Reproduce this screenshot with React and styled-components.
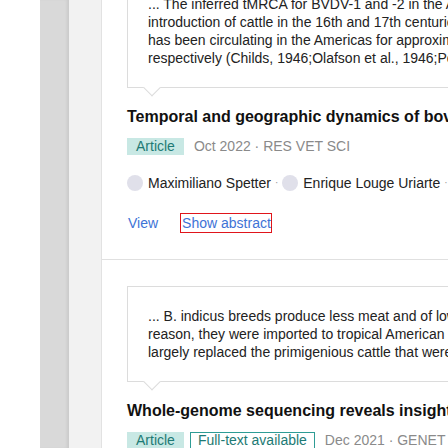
import React from "react";
import styled, { createGlobalStyle } from "styled-components";

const GlobalStyle = createGlobalStyle`
  html, body { margin: 0; padding: 0; background: #fff; overflow: hidden; }
  body { font-family: "Liberation Sans", Arial, sans-serif; color: #222; }
`;

const Page = styled.div`
  display: flex;
  height: 448px;
  width: 448px;
  overflow: hidden;
`;

const Gutter = styled.div`
  flex: 0 0 40px;
  background: #fff;
`;

const Rail = styled.div`
  flex: 0 0 29px;
  background: #d9d9d9;
  box-shadow: inset -3px 0 3px -1px rgba(0, 0, 0, 0.07);
`;

const SidePanel = styled.div`
  flex: 0 0 32px;
  background: #f2f2f2;
  border-right: 1px solid #e2e2e2;
`;

const Main = styled.main`
  flex: 1;
  min-width: 0;
  overflow: hidden;
  background: #fff;
`;

const Feed = styled.div`
  margin-top: -26px;
`;

const Item = styled.section`
  padding: ${(p) => (p.$first ? "0" : "26px")} 0 26px 25px;
  border-bottom: 1px solid #e0e0e0;
`;

const Snippet = styled.div`
  position: relative;
  width: 720px;
  border: 1px solid #dcdcdc;
  padding: 20px 20px;
  font-size: 14px;
  line-height: 18px;
  color: #222;
  background: #fff;

  &::after {
    content: "";
    position: absolute;
    left: 18px;
    bottom: -7px;
    width: 11px;
    height: 11px;
    background: #fff;
    border-right: 1px solid #dcdcdc;
    border-bottom: 1px solid #dcdcdc;
    transform: rotate(45deg);
  }
`;

const Line = styled.span`
  display: block;
  white-space: nowrap;
`;

const Title = styled.h3`
  margin: 19px 0 0;
  font-size: 16px;
  line-height: 20px;
  font-weight: 700;
  color: #111;
  white-space: nowrap;
`;

const MetaRow = styled.div`
  display: flex;
  align-items: center;
  margin-top: 11px;
  font-size: 14px;
  line-height: 17px;
  white-space: nowrap;
`;

const Badge = styled.span`
  padding: 0 ${(p) => (p.$outline ? "7px" : "8px")};
  margin-right: ${(p) => (p.$last ? "10px" : "6px")};
  background: ${(p) => (p.$outline ? "#fff" : "#c8e8e4")};
  border: 1px solid ${(p) => (p.$outline ? "#2e9c95" : "#c8e8e4")};
  color: #1d7a74;
  line-height: 15px;
`;

const MetaText = styled.span`
  color: #8a8a8a;
`;

const Authors = styled.div`
  display: flex;
  align-items: center;
  margin-top: 19px;
  font-size: 14px;
  line-height: 18px;
  color: #222;
  white-space: nowrap;
`;

const Avatar = styled.span`
  flex: 0 0 16px;
  width: 16px;
  height: 16px;
  border-radius: 50%;
  background: #e0e0ea;
  margin-right: 5px;
`;

const Dot = styled.span`
  color: #999;
  font-size: 10px;
  margin: 0 4px 0 4px;
`;

const Actions = styled.div`
  display: flex;
  align-items: center;
  gap: 21px;
  margin-top: 21px;
  font-size: 14px;
  line-height: 18px;
`;

const ActionLink = styled.a`
  color: #3e73d6;
  text-decoration: none;
  cursor: pointer;
  border: 1px solid ${(p) => (p.$focused ? "#e0151b" : "transparent")};
  padding: 0 0 0 1px;
  margin-left: ${(p) => (p.$focused ? "0" : "-1px")};
`;

export default function App() {
  return (
    <>
      <GlobalStyle />
      <Page>
        <Gutter />
        <Rail />
        <SidePanel />
        <Main>
          <Feed>
            <Item $first>
              <Snippet>
                <Line>... The inferred tMRCA for BVDV-1 and -2 in the Americas is consistent with the</Line>
                <Line>introduction of cattle in the 16th and 17th centuries, suggesting that the virus</Line>
                <Line>has been circulating in the Americas for approximately 500 and 400 years,</Line>
                <Line>respectively (Childs, 1946;Olafson et al., 1946;Pellerin et al., 1994) ...</Line>
              </Snippet>
              <Title>Temporal and geographic dynamics of bovine viral diarrhea virus in American countries</Title>
              <MetaRow>
                <Badge $last>Article</Badge>
                <MetaText>Oct 2022 · RES VET SCI</MetaText>
              </MetaRow>
              <Authors>
                <Avatar />
                Maximiliano Spetter
                <Dot>·</Dot>
                <Avatar />
                Enrique Louge Uriarte
                <Dot>·</Dot>
              </Authors>
              <Actions>
                <ActionLink>View</ActionLink>
                <ActionLink $focused>Show abstract</ActionLink>
              </Actions>
            </Item>
            <Item>
              <Snippet>
                <Line>... B. indicus breeds produce less meat and of lower quality than B. taurus. For this</Line>
                <Line>reason, they were imported to tropical American countries, where they have</Line>
                <Line>largely replaced the primigenious cattle that were introduced by the colonizers ...</Line>
              </Snippet>
              <Title>Whole-genome sequencing reveals insights into the adaptation of cattle</Title>
              <MetaRow>
                <Badge>Article</Badge>
                <Badge $outline $last>Full-text available</Badge>
                <MetaText>Dec 2021 · GENET SEL EVOL</MetaText>
              </MetaRow>
            </Item>
          </Feed>
        </Main>
      </Page>
    </>
  );
}
